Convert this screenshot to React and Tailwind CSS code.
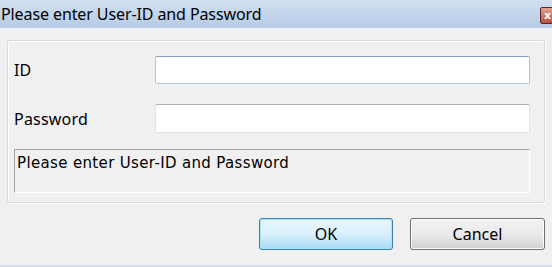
export default function App() {
  return (
    <div className="w-[552px] h-[267px] bg-[#f0f0f0] flex flex-col overflow-hidden relative" style={{ fontFamily: '"Noto Sans", "Open Sans", sans-serif' }}>
      <div className="h-[28px] shrink-0 flex items-center justify-between bg-gradient-to-b from-[#d3e1f1] via-[#c2d5eb] to-[#b6cbe4] pl-[1px]">
        <span className="text-[16px] text-black leading-none tracking-[-0.1px]">Please enter User-ID and Password</span>
        <div className="w-[18px] h-[17px] mt-[3px] mr-[-6px] rounded-[2px] border border-[#5a2a2a] bg-gradient-to-b from-[#e3a293] to-[#b54f3f] flex items-center justify-start pl-[3px]">
          <span className="text-white text-[11px] font-bold leading-none" style={{ fontFamily: '"DejaVu Sans", sans-serif' }}>x</span>
        </div>
      </div>
      <div className="flex-1 flex flex-col px-[7px] pt-[12px]">
        <div className="h-[163px] border border-[#d5dbe0] rounded-[2px] shadow-[inset_1px_1px_0_#ffffff,1px_1px_0_#ffffff] pl-[6px] pr-[14px] pt-[15px] flex flex-col">
          <div className="flex items-center h-[28px]">
            <span className="w-[141px] text-[16px] tracking-[0.2px] text-black">ID</span>
            <div className="flex-1 h-[28px] bg-white border border-[#a9c6dd] border-t-[#7e9fbf] rounded-[2px]" />
          </div>
          <div className="flex items-center h-[29px] mt-[20px]">
            <span className="w-[141px] text-[16px] tracking-[0.2px] text-black">Password</span>
            <div className="flex-1 h-[29px] bg-white border border-[#e2e3ea] border-t-[#abadb3] rounded-[2px]" />
          </div>
          <div className="mt-[16px] h-[44px] border border-[#a0a0a0] border-r-white border-b-white pl-[2px]">
            <span className="text-[15px] tracking-[0.35px] text-black leading-[18px]" style={{ fontFamily: '"DejaVu Sans", sans-serif' }}>Please enter User-ID and Password</span>
          </div>
        </div>
        <div className="flex justify-end gap-[17px] mt-[15px]">
          <div className="w-[134px] h-[32px] rounded-[3px] border border-[#3c7fb1] shadow-[inset_0_0_0_1px_#a8e3f7] bg-gradient-to-b from-[#eaf6fd] via-[#d9f0fc] to-[#a7d9f5] flex items-center justify-center text-[16px] text-black">OK</div>
          <div className="w-[135px] h-[32px] rounded-[3px] border border-[#707070] shadow-[inset_0_0_0_1px_#fcfcfc] bg-gradient-to-b from-[#f2f2f2] via-[#ebebeb] to-[#cfcfcf] flex items-center justify-center text-[16px] text-black">Cancel</div>
        </div>
      </div>
      <div className="h-[2px] bg-[#d3e0ee] shrink-0" />
    </div>
  );
}
